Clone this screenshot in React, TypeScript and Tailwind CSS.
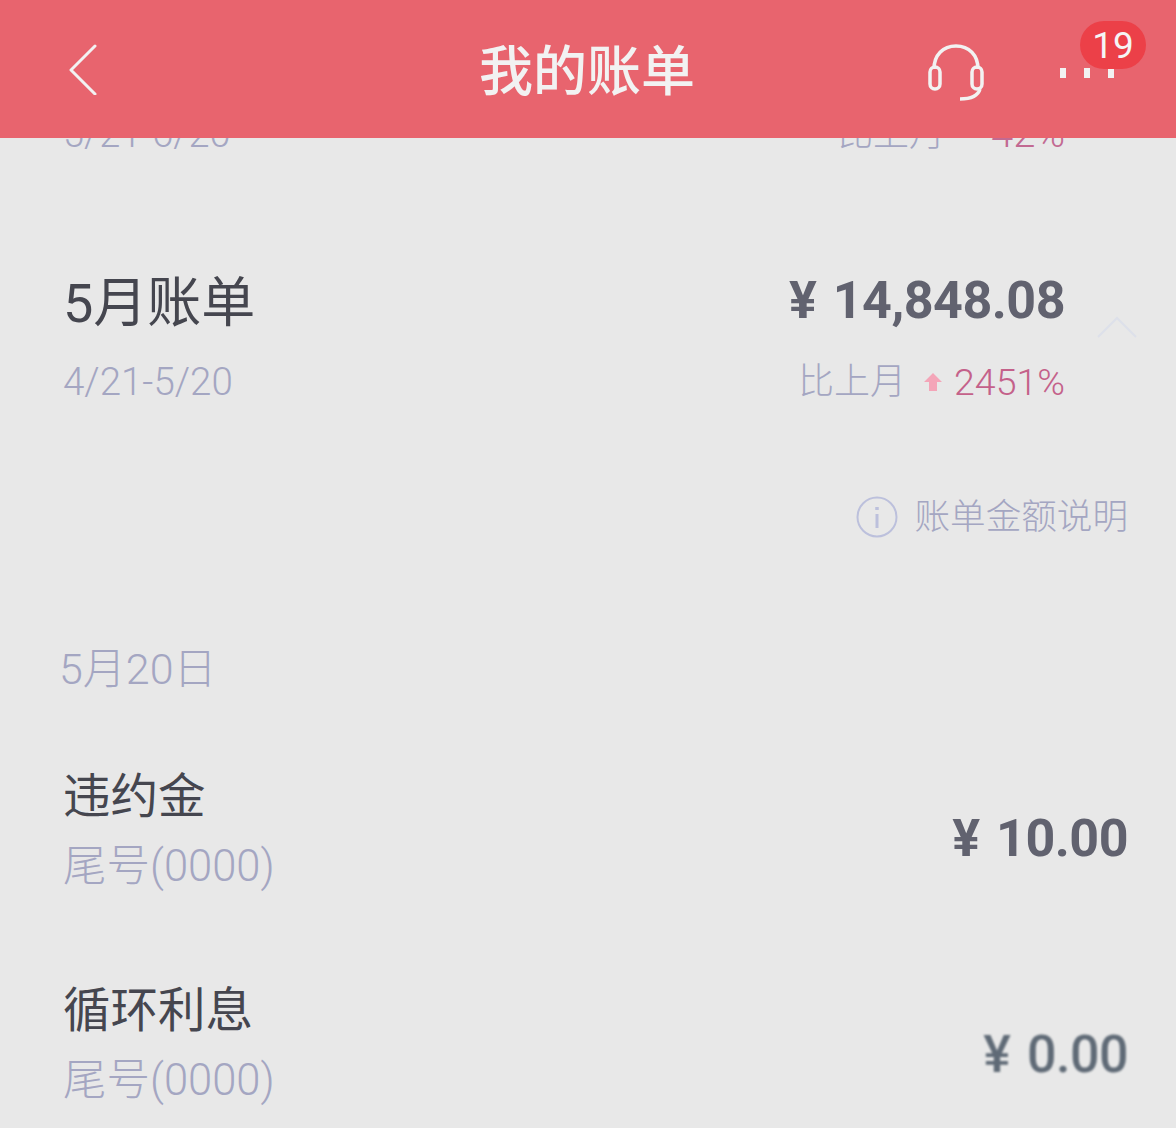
const CJK = "font-['Roboto','Noto_Sans_CJK_SC',sans-serif]";

function Charge({ title, amount, blurred }: { title: string; amount: string; blurred?: boolean }) {
  return (
    <div className="flex h-[214px] items-center justify-between pr-12 pl-[63px]">
      <div>
        <p className="text-[47.5px] leading-[60px] font-normal text-[#45464f]">{title}</p>
        <p className="mt-[10px] text-[43.5px] leading-[60px] font-light text-[#a4a6c2]">尾号(0000)</p>
      </div>
      <p
        className={
          blurred
            ? "pt-[18px] text-[52px] leading-[60px] font-medium tracking-[-0.5px] [word-spacing:4px] text-[#5f6a76] blur-[1px]"
            : "pt-[14px] text-[52px] leading-[60px] font-bold tracking-[-0.5px] [word-spacing:4px] text-[#61626f]"
        }
      >
        {amount}
      </p>
    </div>
  );
}

export default function App() {
  return (
    <div className={`flex h-[1128px] w-[1176px] flex-col overflow-hidden bg-[#e8e8e8] ${CJK}`}>
      <header className="relative z-10 flex h-[138px] shrink-0 items-center justify-between bg-[#e8646e] pr-[62px] pl-[68px] text-[#f2f2f2]">
        <svg width="32" height="52" viewBox="0 0 32 52" fill="none" stroke="currentColor" strokeWidth="3">
          <path d="M28 2L4 26l24 24" strokeLinecap="round" strokeLinejoin="round" transform="translate(-1 1)" />
        </svg>
        <h1 className="absolute top-[39px] left-[479px] text-[54px] leading-[68px] font-medium">我的账单</h1>
        <div className="flex items-center gap-[76px] pt-[6px]">
          <svg width="56" height="58" viewBox="0 0 56 58" fill="none" stroke="currentColor" strokeWidth="3.5">
            <path d="M6 26C6 12 15 3 28 3s22 9 22 23" />
            <rect x="2" y="24" width="10" height="22" rx="5" />
            <rect x="44" y="24" width="10" height="22" rx="5" />
            <path d="M52 46c-2 7-8 10-20 10" />
          </svg>
          <div className="flex gap-[18px] pt-[2px]">
            <span className="h-[10px] w-[6px] bg-[#f2f2f2]" />
            <span className="h-[10px] w-[6px] bg-[#f2f2f2]" />
            <span className="h-[10px] w-[6px] bg-[#f2f2f2]" />
          </div>
        </div>
        <span className="absolute top-[21px] left-[1080px] flex h-[48px] w-[66px] items-center justify-center rounded-full bg-[#ec4048] text-[37px] leading-none font-normal text-[#f5f5f5]">
          19
        </span>
      </header>

      <div className="relative z-0 flex h-[20px] shrink-0 items-end justify-between overflow-hidden pr-[111px] pl-[63px] text-[38px] leading-[48px] font-light text-[#a4a6c2]">
        <span>5/21-6/20</span>
        <span className="flex gap-[46px]">
          <span className="text-[36px]">比上月</span>
          <span className="text-[40px] text-[#c26a92]">42%</span>
        </span>
      </div>

      <section className="relative flex justify-between pt-[114px] pr-[111px] pl-[63px]">
        <div>
          <p className="text-[54px] leading-[64px] font-normal text-[#45464f]">5月账单</p>
          <p className="mt-[22px] text-[38.5px] leading-[48px] font-light text-[#a4a6c2]">4/21-5/20</p>
        </div>
        <div className="flex flex-col items-end">
          <p className="-mt-[3px] mb-[3px] text-[52px] leading-[64px] font-bold tracking-[-0.5px] [word-spacing:4px] text-[#61626f]">
            ¥ 14,848.08
          </p>
          <p className="mt-[22px] flex items-center text-[36px] leading-[48px] font-light text-[#a4a6c2]">
            比上月
            <svg className="mr-[12px] ml-[18px]" width="18" height="20" viewBox="0 0 18 20">
              <path d="M9 1l9 9h-5v9H5v-9H0z" fill="#f4a5b8" />
            </svg>
            <span className="text-[37.5px] text-[#c4618a]">2451%</span>
          </p>
        </div>
        <svg
          className="absolute top-[158px] left-[1097px] text-[#dde0ea]"
          width="40"
          height="22"
          viewBox="0 0 40 22"
          fill="none"
          stroke="currentColor"
          strokeWidth="2"
        >
          <path d="M1 21L20 2l19 19" />
        </svg>
      </section>

      <div className="mt-[87px] flex items-center justify-end gap-[17px] pr-12">
        <svg width="42" height="42" viewBox="0 0 42 42" fill="none" stroke="#bcc0dc" strokeWidth="2">
          <circle cx="21" cy="21" r="19.5" />
          <path d="M21 18v14" strokeWidth="3" />
          <path d="M21 11v3" strokeWidth="3.5" />
        </svg>
        <span className="text-[35.6px] leading-[48px] font-light text-[#a4a6c2]">账单金额说明</span>
      </div>

      <p className="mt-[100px] pl-[59px] text-[43px] leading-[56px] font-light text-[#a4a6c2]">5月20日</p>

      <div className="mt-[28px]">
        <Charge title="违约金" amount="¥ 10.00" />
        <Charge title="循环利息" amount="¥ 0.00" blurred />
      </div>
    </div>
  );
}
